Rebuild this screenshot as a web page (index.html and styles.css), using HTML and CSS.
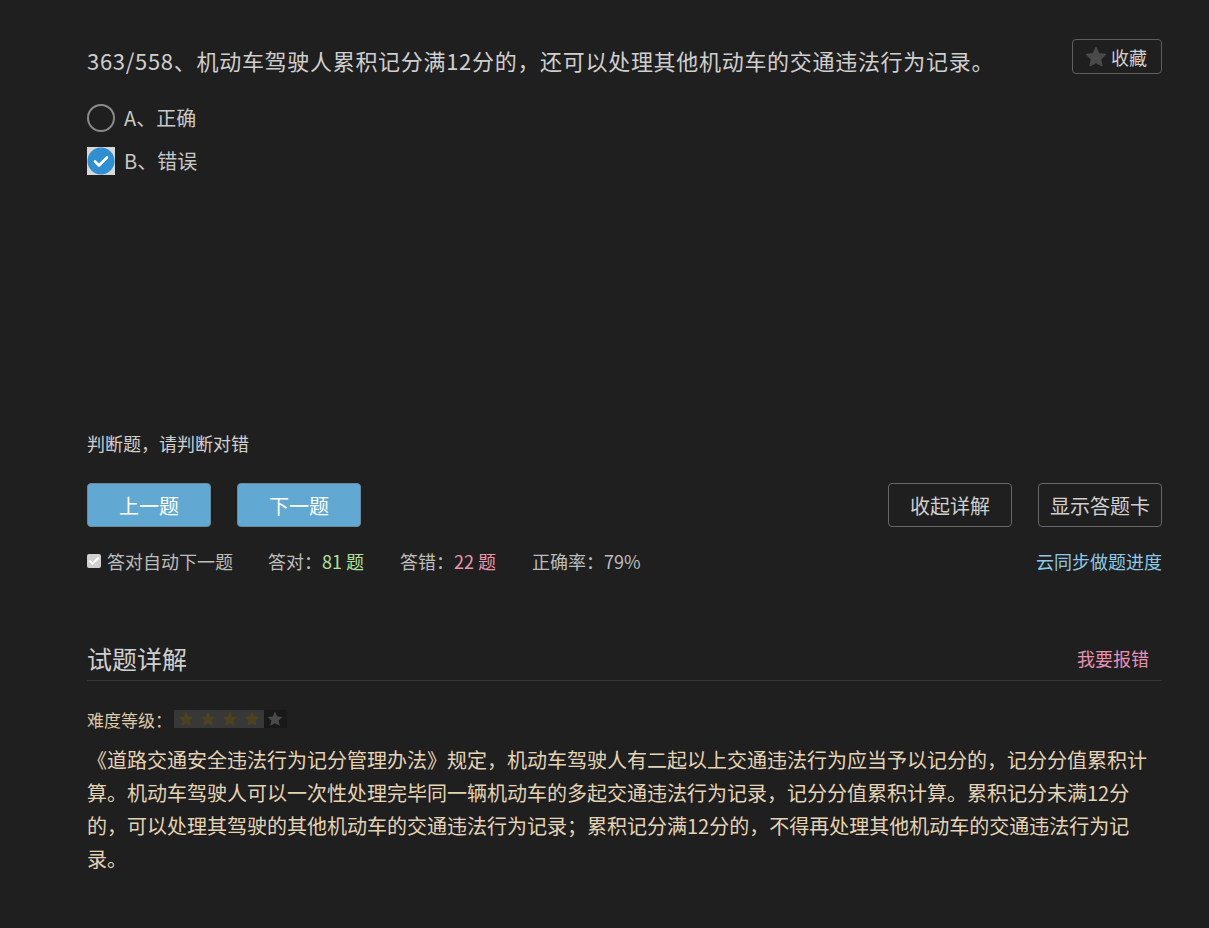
FILE: index.html
```html
<!DOCTYPE html>
<html lang="zh">
<head>
<meta charset="utf-8">
<link rel="stylesheet" href="styles.css">
</head>
<body>
<div class="page">
  <div class="q-head">
    <h1 class="q-title">363/558、机动车驾驶人累积记分满12分的，还可以处理其他机动车的交通违法行为记录。</h1>
    <button class="fav"><svg width="22" height="22" viewBox="0 0 24 24"><path d="M12 1.8l3.1 6.6 7.1.9-5.2 4.9 1.4 7.1L12 17.8l-6.4 3.5 1.4-7.1L1.8 9.3l7.1-.9z" fill="#4a4a4a" stroke="#4a4a4a" stroke-width="1.5" stroke-linejoin="round"/></svg><span>收藏</span></button>
  </div>
  <ul class="options">
    <li class="opt"><span class="radio"></span><span>A、正确</span></li>
    <li class="opt"><span class="checked"><svg width="28" height="28" viewBox="0 0 28 28"><rect width="28" height="28" fill="#d8d8d8"/><circle cx="14" cy="14" r="13.5" fill="#2f8fd0"/><path d="M8 14.5l4 4 8-8" fill="none" stroke="#fff" stroke-width="2.6" stroke-linecap="round" stroke-linejoin="round"/></svg></span><span>B、错误</span></li>
  </ul>
  <p class="hint">判断题，请判断对错</p>
  <div class="actions">
    <div class="nav">
      <button class="btn primary">上一题</button>
      <button class="btn primary">下一题</button>
    </div>
    <div class="nav">
      <button class="btn ghost">收起详解</button>
      <button class="btn ghost">显示答题卡</button>
    </div>
  </div>
  <div class="stats">
    <label class="auto"><span class="cb"><svg width="14" height="14" viewBox="0 0 14 14"><rect width="14" height="14" rx="2" fill="#d0d0d0"/><path d="M3 7.2l2.6 2.6L11 4.2" fill="none" stroke="#fff" stroke-width="2.2" stroke-linecap="round" stroke-linejoin="round"/></svg></span>答对自动下一题</label>
    <span class="stat">答对：<em class="ok">81 题</em></span>
    <span class="stat">答错：<em class="bad">22 题</em></span>
    <span class="stat">正确率：79%</span>
    <a class="sync">云同步做题进度</a>
  </div>
  <div class="detail-head">
    <h2>试题详解</h2>
    <a class="report">我要报错</a>
  </div>
  <div class="level">
    <span class="level-label">难度等级：</span>
    <span class="stars">
      <span class="on">
        <svg width="22" height="18" viewBox="-1 0 26 24"><path d="M12 2l3 6.5 7 .8-5.2 4.8 1.5 7L12 17.6 5.7 21.1l1.5-7L2 9.3l7-.8z" fill="#4d4220"/></svg>
        <svg width="22" height="18" viewBox="-1 0 26 24"><path d="M12 2l3 6.5 7 .8-5.2 4.8 1.5 7L12 17.6 5.7 21.1l1.5-7L2 9.3l7-.8z" fill="#4d4220"/></svg>
        <svg width="22" height="18" viewBox="-1 0 26 24"><path d="M12 2l3 6.5 7 .8-5.2 4.8 1.5 7L12 17.6 5.7 21.1l1.5-7L2 9.3l7-.8z" fill="#4d4220"/></svg>
        <svg width="22" height="18" viewBox="-1 0 26 24"><path d="M12 2l3 6.5 7 .8-5.2 4.8 1.5 7L12 17.6 5.7 21.1l1.5-7L2 9.3l7-.8z" fill="#4d4220"/></svg>
      </span>
      <span class="off">
        <svg width="22" height="18" viewBox="-1 0 26 24"><path d="M12 2l3 6.5 7 .8-5.2 4.8 1.5 7L12 17.6 5.7 21.1l1.5-7L2 9.3l7-.8z" fill="#4a4a4a"/></svg>
      </span>
    </span>
  </div>
  <p class="explain">《道路交通安全违法行为记分管理办法》规定，机动车驾驶人有二起以上交通违法行为应当予以记分的，记分分值累积计算。机动车驾驶人可以一次性处理完毕同一辆机动车的多起交通违法行为记录，记分分值累积计算。累积记分未满12分的，可以处理其驾驶的其他机动车的交通违法行为记录；累积记分满12分的，不得再处理其他机动车的交通违法行为记录。</p>
</div>
</body>
</html>
```

FILE: styles.css
```css
* { box-sizing: border-box; }
html, body { margin: 0; padding: 0; background: #1f1f1f; }
body {
  font-family: "Noto Sans CJK SC", "Noto Sans", sans-serif;
  color: #c8c8c8;
}
.page { width: 1075px; margin-left: 87px; padding-top: 39px; }
.q-head { display: flex; justify-content: space-between; align-items: flex-start; }
.q-title { margin: 0; font-size: 22px; letter-spacing: 0.7px; font-weight: normal; line-height: 42px; color: #cfcfcf; }
.fav {
  display: flex; align-items: center; gap: 4px; flex: none;
  height: 35px; width: 90px;
  padding: 0 0 0 12px;
  border: 1px solid #5e5e5e; border-radius: 4px; background: transparent;
  color: #cfcfcf; font-family: inherit; font-size: 18px;
}
.options { list-style: none; margin: 15px 0 0; padding: 0; }
.opt { display: flex; align-items: center; gap: 9px; height: 43px; font-size: 20px; color: #c8c8c8; }
.radio { width: 28px; height: 28px; border-radius: 50%; border: 2px solid #8a8a8a; }
.checked { display: flex; width: 28px; height: 28px; }
.hint { margin: 247px 0 0; font-size: 18px; line-height: 28px; color: #cfcfcf; }
.actions { display: flex; justify-content: space-between; margin-top: 26px; }
.nav { display: flex; gap: 26px; }
.btn {
  width: 124px; height: 44px; border-radius: 4px;
  font-family: inherit; font-size: 20px; padding: 0;
}
.primary { background: #61a9d3; border: 1px solid #6b8a9c; color: #fff; }
.ghost { background: transparent; border: 1px solid #666; color: #cfcfcf; }
.stats { display: flex; align-items: center; margin-top: 22px; font-size: 18px; color: #bdbdbd; line-height: 24px; }
.auto { display: flex; align-items: center; gap: 6px; width: 181px; color: #bdbdbd; }
.cb { display: flex; }
.stat { margin-right: 36px; }
.stat em { font-style: normal; }
.ok { color: #b2e197; }
.bad { color: #e996a8; }
.sync { margin-left: auto; color: #8ec9e6; }
.detail-head {
  display: flex; justify-content: space-between; align-items: center;
  margin-top: 62px; height: 46px; border-bottom: 1px solid #353535;
}
.detail-head h2 { margin: 0; font-size: 25px; font-weight: normal; color: #cfcfcf; }
.report { color: #e691b6; font-size: 18px; margin-right: 13px; }
.level { display: flex; align-items: center; margin-top: 28px; height: 20px; font-size: 17px; color: #dcc9a8; }
.level-label { width: 87px; }
.stars { display: flex; }
.on { display: flex; height: 18px; padding: 0 1px; background: #383838; align-items: center; }
.off { display: flex; height: 18px; padding: 0 1px 0 0; background: #191919; align-items: center; }
.explain { margin: 14px 0 0; font-size: 20px; line-height: 33px; color: #e4d3b5; }
```
